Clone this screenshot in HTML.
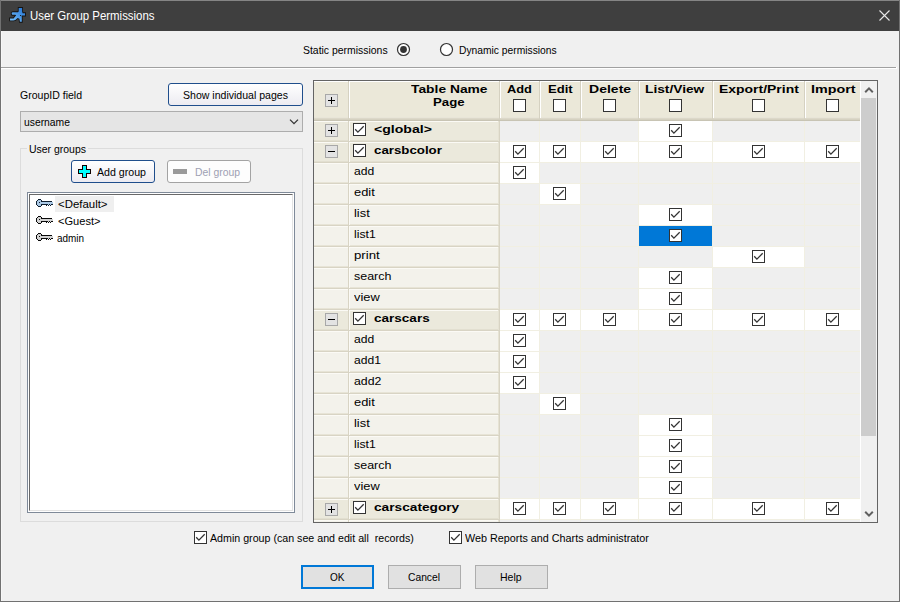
<!DOCTYPE html>
<html><head><meta charset="utf-8"><title>User Group Permissions</title>
<style>
html,body{margin:0;padding:0;width:900px;height:602px;overflow:hidden;background:#f0f0f0}
body{position:relative;font-family:'Liberation Sans', sans-serif}
body>div,body>svg,body>span{position:absolute;box-sizing:content-box}
span{white-space:pre;transform-origin:0 0}
</style></head><body>
<div style="left:0px;top:0px;width:900px;height:602px;background:#f0f0f0"></div>
<div style="left:0px;top:0px;width:900px;height:31px;background:#3f3f3f"></div>
<div style="left:0px;top:0px;width:900px;height:1px;background:#858585"></div>
<div style="left:0px;top:0px;width:1px;height:602px;background:#717171"></div>
<div style="left:899px;top:0px;width:1px;height:602px;background:#717171"></div>
<div style="left:0px;top:601px;width:900px;height:1px;background:#717171"></div>
<svg style="left:6px;top:4px" width="24" height="22" viewBox="0 0 24 22">
<defs><linearGradient id="rg" x1="0" y1="1" x2="1" y2="0"><stop offset="0" stop-color="#7cc6ff"/><stop offset="1" stop-color="#1f6fd0"/></linearGradient></defs>
<path d="M12.7 4.0 L16.1 4.0 L16.1 7.4 L16.6 9.2 L19.0 9.2 L19.0 11.6 L15.5 11.6 L15.8 13.0 L15.8 17.8 L13.9 17.8 L13.4 14.8 L11.6 13.9 L9.4 15.9 L7.5 16.4 L4.1 16.4 L4.0 14.4 L7.6 14.4 L10.2 11.3 L9.2 10.8 L6.2 10.8 L5.7 9.8 L5.8 8.6 L7.0 8.2 L11.9 8.2 L12.7 7.4 Z" fill="#141414" stroke="#141414" stroke-width="1.8" stroke-linejoin="miter"/>
<path d="M12.7 4.0 L16.1 4.0 L16.1 7.4 L16.6 9.2 L19.0 9.2 L19.0 11.6 L15.5 11.6 L15.8 13.0 L15.8 17.8 L13.9 17.8 L13.4 14.8 L11.6 13.9 L9.4 15.9 L7.5 16.4 L4.1 16.4 L4.0 14.4 L7.6 14.4 L10.2 11.3 L9.2 10.8 L6.2 10.8 L5.7 9.8 L5.8 8.6 L7.0 8.2 L11.9 8.2 L12.7 7.4 Z" fill="url(#rg)"/>
<rect x="14" y="11" width="1" height="1" fill="#222"/>
</svg>
<svg style="left:878px;top:9px" width="13" height="13" viewBox="0 0 13 13"><path d="M1.5 1.5 L11.5 11.5 M11.5 1.5 L1.5 11.5" stroke="#e8e8e8" stroke-width="1.1"/></svg>
<div style="left:1px;top:31px;width:1px;height:570px;background:#f7f7f7"></div>
<svg style="left:396px;top:42px" width="15" height="15" viewBox="0 0 15 15"><circle cx="7.5" cy="7.5" r="6" fill="#fff" stroke="#333" stroke-width="1.2"/><circle cx="7.5" cy="7.5" r="3.4" fill="#333"/></svg>
<svg style="left:439px;top:42px" width="15" height="15" viewBox="0 0 15 15"><circle cx="7.5" cy="7.5" r="6" fill="#fff" stroke="#333" stroke-width="1.2"/></svg>
<div style="left:1px;top:67px;width:895px;height:1px;background:#a0a0a0"></div>
<div style="left:1px;top:68px;width:896px;height:1px;background:#fff"></div>
<div style="left:896px;top:67px;width:1px;height:1px;background:#fff"></div>
<div style="left:168px;top:83px;width:133px;height:21px;border:1px solid #1f4e8c;border-radius:3px;background:linear-gradient(#ffffff,#ecebf1)"></div>
<div style="left:20px;top:111px;width:281px;height:19px;border:1px solid #adadad;background:#e5e5e5"></div>
<svg style="left:289px;top:118px" width="10" height="7" viewBox="0 0 10 7"><path d="M1 1.6 L5 5.6 L9 1.6" fill="none" stroke="#333" stroke-width="1.3"/></svg>
<div style="left:20px;top:148px;width:281px;height:372px;border:1px solid #dcdcdc"></div>
<div style="left:27px;top:146px;width:61px;height:5px;background:#f0f0f0"></div>
<div style="left:71px;top:160px;width:82px;height:21px;border:1px solid #1f4e8c;border-radius:3px;background:linear-gradient(#ffffff,#ecebf1)"></div>
<svg style="left:78px;top:165px" width="13" height="13" viewBox="0 0 13 13" shape-rendering="crispEdges"><path d="M4 0 H9 V4 H13 V9 H9 V13 H4 V9 H0 V4 H4 Z" fill="#100000"/><path d="M5 1 H8 V5 H12 V8 H8 V12 H5 V8 H1 V5 H5 Z" fill="#00ffff"/></svg>
<div style="left:167px;top:160px;width:82px;height:21px;border:1px solid #a3a3a3;border-radius:3px;background:#fdfdfd"></div>
<div style="left:173px;top:169px;width:14px;height:5px;background:#9a9a9a"></div>
<div style="left:27px;top:192px;width:266px;height:319px;border:1px solid #7f8a99;background:#fff"></div>
<div style="left:29px;top:194px;width:262px;height:315px;border:1px solid #e3e3e3;border-left-color:#696969;border-top-color:#696969;background:#fff"></div>
<div style="left:55px;top:196px;width:59px;height:16px;background:#efefef"></div>
<svg style="left:36px;top:199px" width="17" height="8" viewBox="0 0 17 8" shape-rendering="crispEdges"><rect x="2" y="0" width="1" height="1" fill="#0f1f30"/><rect x="3" y="0" width="1" height="1" fill="#0f1f30"/><rect x="4" y="0" width="1" height="1" fill="#0f1f30"/><rect x="1" y="1" width="1" height="1" fill="#0f1f30"/><rect x="2" y="1" width="1" height="1" fill="#abc9e6"/><rect x="3" y="1" width="1" height="1" fill="#abc9e6"/><rect x="4" y="1" width="1" height="1" fill="#abc9e6"/><rect x="5" y="1" width="1" height="1" fill="#0f1f30"/><rect x="0" y="2" width="1" height="1" fill="#0f1f30"/><rect x="1" y="2" width="1" height="1" fill="#abc9e6"/><rect x="2" y="2" width="1" height="1" fill="#abc9e6"/><rect x="3" y="2" width="1" height="1" fill="#abc9e6"/><rect x="4" y="2" width="1" height="1" fill="#abc9e6"/><rect x="5" y="2" width="1" height="1" fill="#0f1f30"/><rect x="6" y="2" width="1" height="1" fill="#0f1f30"/><rect x="7" y="2" width="1" height="1" fill="#0f1f30"/><rect x="8" y="2" width="1" height="1" fill="#0f1f30"/><rect x="9" y="2" width="1" height="1" fill="#0f1f30"/><rect x="10" y="2" width="1" height="1" fill="#0f1f30"/><rect x="11" y="2" width="1" height="1" fill="#0f1f30"/><rect x="12" y="2" width="1" height="1" fill="#0f1f30"/><rect x="13" y="2" width="1" height="1" fill="#0f1f30"/><rect x="14" y="2" width="1" height="1" fill="#0f1f30"/><rect x="15" y="2" width="1" height="1" fill="#0f1f30"/><rect x="0" y="3" width="1" height="1" fill="#0f1f30"/><rect x="1" y="3" width="1" height="1" fill="#abc9e6"/><rect x="2" y="3" width="1" height="1" fill="#abc9e6"/><rect x="3" y="3" width="1" height="1" fill="#0f1f30"/><rect x="4" y="3" width="1" height="1" fill="#abc9e6"/><rect x="5" y="3" width="1" height="1" fill="#abc9e6"/><rect x="6" y="3" width="1" height="1" fill="#abc9e6"/><rect x="7" y="3" width="1" height="1" fill="#abc9e6"/><rect x="8" y="3" width="1" height="1" fill="#abc9e6"/><rect x="9" y="3" width="1" height="1" fill="#abc9e6"/><rect x="10" y="3" width="1" height="1" fill="#abc9e6"/><rect x="11" y="3" width="1" height="1" fill="#abc9e6"/><rect x="12" y="3" width="1" height="1" fill="#abc9e6"/><rect x="13" y="3" width="1" height="1" fill="#abc9e6"/><rect x="14" y="3" width="1" height="1" fill="#abc9e6"/><rect x="15" y="3" width="1" height="1" fill="#abc9e6"/><rect x="16" y="3" width="1" height="1" fill="#abc9e6"/><rect x="0" y="4" width="1" height="1" fill="#0f1f30"/><rect x="1" y="4" width="1" height="1" fill="#abc9e6"/><rect x="2" y="4" width="1" height="1" fill="#abc9e6"/><rect x="3" y="4" width="1" height="1" fill="#abc9e6"/><rect x="4" y="4" width="1" height="1" fill="#abc9e6"/><rect x="5" y="4" width="1" height="1" fill="#abc9e6"/><rect x="6" y="4" width="1" height="1" fill="#abc9e6"/><rect x="7" y="4" width="1" height="1" fill="#abc9e6"/><rect x="8" y="4" width="1" height="1" fill="#abc9e6"/><rect x="9" y="4" width="1" height="1" fill="#abc9e6"/><rect x="10" y="4" width="1" height="1" fill="#abc9e6"/><rect x="11" y="4" width="1" height="1" fill="#abc9e6"/><rect x="12" y="4" width="1" height="1" fill="#abc9e6"/><rect x="13" y="4" width="1" height="1" fill="#abc9e6"/><rect x="14" y="4" width="1" height="1" fill="#abc9e6"/><rect x="15" y="4" width="1" height="1" fill="#abc9e6"/><rect x="16" y="4" width="1" height="1" fill="#abc9e6"/><rect x="0" y="5" width="1" height="1" fill="#0f1f30"/><rect x="1" y="5" width="1" height="1" fill="#abc9e6"/><rect x="2" y="5" width="1" height="1" fill="#abc9e6"/><rect x="3" y="5" width="1" height="1" fill="#abc9e6"/><rect x="4" y="5" width="1" height="1" fill="#abc9e6"/><rect x="5" y="5" width="1" height="1" fill="#0f1f30"/><rect x="6" y="5" width="1" height="1" fill="#0f1f30"/><rect x="7" y="5" width="1" height="1" fill="#0f1f30"/><rect x="8" y="5" width="1" height="1" fill="#0f1f30"/><rect x="9" y="5" width="1" height="1" fill="#0f1f30"/><rect x="10" y="5" width="1" height="1" fill="#0f1f30"/><rect x="11" y="5" width="1" height="1" fill="#0f1f30"/><rect x="12" y="5" width="1" height="1" fill="#abc9e6"/><rect x="13" y="5" width="1" height="1" fill="#0f1f30"/><rect x="14" y="5" width="1" height="1" fill="#abc9e6"/><rect x="15" y="5" width="1" height="1" fill="#0f1f30"/><rect x="16" y="5" width="1" height="1" fill="#0f1f30"/><rect x="1" y="6" width="1" height="1" fill="#0f1f30"/><rect x="2" y="6" width="1" height="1" fill="#abc9e6"/><rect x="3" y="6" width="1" height="1" fill="#abc9e6"/><rect x="4" y="6" width="1" height="1" fill="#abc9e6"/><rect x="5" y="6" width="1" height="1" fill="#0f1f30"/><rect x="10" y="6" width="1" height="1" fill="#0f1f30"/><rect x="12" y="6" width="1" height="1" fill="#0f1f30"/><rect x="14" y="6" width="1" height="1" fill="#0f1f30"/><rect x="2" y="7" width="1" height="1" fill="#0f1f30"/><rect x="3" y="7" width="1" height="1" fill="#0f1f30"/><rect x="4" y="7" width="1" height="1" fill="#0f1f30"/></svg>
<svg style="left:36px;top:216px" width="17" height="8" viewBox="0 0 17 8" shape-rendering="crispEdges"><rect x="2" y="0" width="1" height="1" fill="#0a0a0a"/><rect x="3" y="0" width="1" height="1" fill="#0a0a0a"/><rect x="4" y="0" width="1" height="1" fill="#0a0a0a"/><rect x="1" y="1" width="1" height="1" fill="#0a0a0a"/><rect x="2" y="1" width="1" height="1" fill="#d2d2d2"/><rect x="3" y="1" width="1" height="1" fill="#d2d2d2"/><rect x="4" y="1" width="1" height="1" fill="#d2d2d2"/><rect x="5" y="1" width="1" height="1" fill="#0a0a0a"/><rect x="0" y="2" width="1" height="1" fill="#0a0a0a"/><rect x="1" y="2" width="1" height="1" fill="#d2d2d2"/><rect x="2" y="2" width="1" height="1" fill="#d2d2d2"/><rect x="3" y="2" width="1" height="1" fill="#d2d2d2"/><rect x="4" y="2" width="1" height="1" fill="#d2d2d2"/><rect x="5" y="2" width="1" height="1" fill="#0a0a0a"/><rect x="6" y="2" width="1" height="1" fill="#0a0a0a"/><rect x="7" y="2" width="1" height="1" fill="#0a0a0a"/><rect x="8" y="2" width="1" height="1" fill="#0a0a0a"/><rect x="9" y="2" width="1" height="1" fill="#0a0a0a"/><rect x="10" y="2" width="1" height="1" fill="#0a0a0a"/><rect x="11" y="2" width="1" height="1" fill="#0a0a0a"/><rect x="12" y="2" width="1" height="1" fill="#0a0a0a"/><rect x="13" y="2" width="1" height="1" fill="#0a0a0a"/><rect x="14" y="2" width="1" height="1" fill="#0a0a0a"/><rect x="15" y="2" width="1" height="1" fill="#0a0a0a"/><rect x="0" y="3" width="1" height="1" fill="#0a0a0a"/><rect x="1" y="3" width="1" height="1" fill="#d2d2d2"/><rect x="2" y="3" width="1" height="1" fill="#d2d2d2"/><rect x="3" y="3" width="1" height="1" fill="#0a0a0a"/><rect x="4" y="3" width="1" height="1" fill="#d2d2d2"/><rect x="5" y="3" width="1" height="1" fill="#d2d2d2"/><rect x="6" y="3" width="1" height="1" fill="#d2d2d2"/><rect x="7" y="3" width="1" height="1" fill="#d2d2d2"/><rect x="8" y="3" width="1" height="1" fill="#d2d2d2"/><rect x="9" y="3" width="1" height="1" fill="#d2d2d2"/><rect x="10" y="3" width="1" height="1" fill="#d2d2d2"/><rect x="11" y="3" width="1" height="1" fill="#d2d2d2"/><rect x="12" y="3" width="1" height="1" fill="#d2d2d2"/><rect x="13" y="3" width="1" height="1" fill="#d2d2d2"/><rect x="14" y="3" width="1" height="1" fill="#d2d2d2"/><rect x="15" y="3" width="1" height="1" fill="#d2d2d2"/><rect x="16" y="3" width="1" height="1" fill="#d2d2d2"/><rect x="0" y="4" width="1" height="1" fill="#0a0a0a"/><rect x="1" y="4" width="1" height="1" fill="#d2d2d2"/><rect x="2" y="4" width="1" height="1" fill="#d2d2d2"/><rect x="3" y="4" width="1" height="1" fill="#d2d2d2"/><rect x="4" y="4" width="1" height="1" fill="#d2d2d2"/><rect x="5" y="4" width="1" height="1" fill="#d2d2d2"/><rect x="6" y="4" width="1" height="1" fill="#d2d2d2"/><rect x="7" y="4" width="1" height="1" fill="#d2d2d2"/><rect x="8" y="4" width="1" height="1" fill="#d2d2d2"/><rect x="9" y="4" width="1" height="1" fill="#d2d2d2"/><rect x="10" y="4" width="1" height="1" fill="#d2d2d2"/><rect x="11" y="4" width="1" height="1" fill="#d2d2d2"/><rect x="12" y="4" width="1" height="1" fill="#d2d2d2"/><rect x="13" y="4" width="1" height="1" fill="#d2d2d2"/><rect x="14" y="4" width="1" height="1" fill="#d2d2d2"/><rect x="15" y="4" width="1" height="1" fill="#d2d2d2"/><rect x="16" y="4" width="1" height="1" fill="#d2d2d2"/><rect x="0" y="5" width="1" height="1" fill="#0a0a0a"/><rect x="1" y="5" width="1" height="1" fill="#d2d2d2"/><rect x="2" y="5" width="1" height="1" fill="#d2d2d2"/><rect x="3" y="5" width="1" height="1" fill="#d2d2d2"/><rect x="4" y="5" width="1" height="1" fill="#d2d2d2"/><rect x="5" y="5" width="1" height="1" fill="#0a0a0a"/><rect x="6" y="5" width="1" height="1" fill="#0a0a0a"/><rect x="7" y="5" width="1" height="1" fill="#0a0a0a"/><rect x="8" y="5" width="1" height="1" fill="#0a0a0a"/><rect x="9" y="5" width="1" height="1" fill="#0a0a0a"/><rect x="10" y="5" width="1" height="1" fill="#0a0a0a"/><rect x="11" y="5" width="1" height="1" fill="#0a0a0a"/><rect x="12" y="5" width="1" height="1" fill="#d2d2d2"/><rect x="13" y="5" width="1" height="1" fill="#0a0a0a"/><rect x="14" y="5" width="1" height="1" fill="#d2d2d2"/><rect x="15" y="5" width="1" height="1" fill="#0a0a0a"/><rect x="16" y="5" width="1" height="1" fill="#0a0a0a"/><rect x="1" y="6" width="1" height="1" fill="#0a0a0a"/><rect x="2" y="6" width="1" height="1" fill="#d2d2d2"/><rect x="3" y="6" width="1" height="1" fill="#d2d2d2"/><rect x="4" y="6" width="1" height="1" fill="#d2d2d2"/><rect x="5" y="6" width="1" height="1" fill="#0a0a0a"/><rect x="10" y="6" width="1" height="1" fill="#0a0a0a"/><rect x="12" y="6" width="1" height="1" fill="#0a0a0a"/><rect x="14" y="6" width="1" height="1" fill="#0a0a0a"/><rect x="2" y="7" width="1" height="1" fill="#0a0a0a"/><rect x="3" y="7" width="1" height="1" fill="#0a0a0a"/><rect x="4" y="7" width="1" height="1" fill="#0a0a0a"/></svg>
<svg style="left:36px;top:233px" width="17" height="8" viewBox="0 0 17 8" shape-rendering="crispEdges"><rect x="2" y="0" width="1" height="1" fill="#0a0a0a"/><rect x="3" y="0" width="1" height="1" fill="#0a0a0a"/><rect x="4" y="0" width="1" height="1" fill="#0a0a0a"/><rect x="1" y="1" width="1" height="1" fill="#0a0a0a"/><rect x="2" y="1" width="1" height="1" fill="#d2d2d2"/><rect x="3" y="1" width="1" height="1" fill="#d2d2d2"/><rect x="4" y="1" width="1" height="1" fill="#d2d2d2"/><rect x="5" y="1" width="1" height="1" fill="#0a0a0a"/><rect x="0" y="2" width="1" height="1" fill="#0a0a0a"/><rect x="1" y="2" width="1" height="1" fill="#d2d2d2"/><rect x="2" y="2" width="1" height="1" fill="#d2d2d2"/><rect x="3" y="2" width="1" height="1" fill="#d2d2d2"/><rect x="4" y="2" width="1" height="1" fill="#d2d2d2"/><rect x="5" y="2" width="1" height="1" fill="#0a0a0a"/><rect x="6" y="2" width="1" height="1" fill="#0a0a0a"/><rect x="7" y="2" width="1" height="1" fill="#0a0a0a"/><rect x="8" y="2" width="1" height="1" fill="#0a0a0a"/><rect x="9" y="2" width="1" height="1" fill="#0a0a0a"/><rect x="10" y="2" width="1" height="1" fill="#0a0a0a"/><rect x="11" y="2" width="1" height="1" fill="#0a0a0a"/><rect x="12" y="2" width="1" height="1" fill="#0a0a0a"/><rect x="13" y="2" width="1" height="1" fill="#0a0a0a"/><rect x="14" y="2" width="1" height="1" fill="#0a0a0a"/><rect x="15" y="2" width="1" height="1" fill="#0a0a0a"/><rect x="0" y="3" width="1" height="1" fill="#0a0a0a"/><rect x="1" y="3" width="1" height="1" fill="#d2d2d2"/><rect x="2" y="3" width="1" height="1" fill="#d2d2d2"/><rect x="3" y="3" width="1" height="1" fill="#0a0a0a"/><rect x="4" y="3" width="1" height="1" fill="#d2d2d2"/><rect x="5" y="3" width="1" height="1" fill="#d2d2d2"/><rect x="6" y="3" width="1" height="1" fill="#d2d2d2"/><rect x="7" y="3" width="1" height="1" fill="#d2d2d2"/><rect x="8" y="3" width="1" height="1" fill="#d2d2d2"/><rect x="9" y="3" width="1" height="1" fill="#d2d2d2"/><rect x="10" y="3" width="1" height="1" fill="#d2d2d2"/><rect x="11" y="3" width="1" height="1" fill="#d2d2d2"/><rect x="12" y="3" width="1" height="1" fill="#d2d2d2"/><rect x="13" y="3" width="1" height="1" fill="#d2d2d2"/><rect x="14" y="3" width="1" height="1" fill="#d2d2d2"/><rect x="15" y="3" width="1" height="1" fill="#d2d2d2"/><rect x="16" y="3" width="1" height="1" fill="#d2d2d2"/><rect x="0" y="4" width="1" height="1" fill="#0a0a0a"/><rect x="1" y="4" width="1" height="1" fill="#d2d2d2"/><rect x="2" y="4" width="1" height="1" fill="#d2d2d2"/><rect x="3" y="4" width="1" height="1" fill="#d2d2d2"/><rect x="4" y="4" width="1" height="1" fill="#d2d2d2"/><rect x="5" y="4" width="1" height="1" fill="#d2d2d2"/><rect x="6" y="4" width="1" height="1" fill="#d2d2d2"/><rect x="7" y="4" width="1" height="1" fill="#d2d2d2"/><rect x="8" y="4" width="1" height="1" fill="#d2d2d2"/><rect x="9" y="4" width="1" height="1" fill="#d2d2d2"/><rect x="10" y="4" width="1" height="1" fill="#d2d2d2"/><rect x="11" y="4" width="1" height="1" fill="#d2d2d2"/><rect x="12" y="4" width="1" height="1" fill="#d2d2d2"/><rect x="13" y="4" width="1" height="1" fill="#d2d2d2"/><rect x="14" y="4" width="1" height="1" fill="#d2d2d2"/><rect x="15" y="4" width="1" height="1" fill="#d2d2d2"/><rect x="16" y="4" width="1" height="1" fill="#d2d2d2"/><rect x="0" y="5" width="1" height="1" fill="#0a0a0a"/><rect x="1" y="5" width="1" height="1" fill="#d2d2d2"/><rect x="2" y="5" width="1" height="1" fill="#d2d2d2"/><rect x="3" y="5" width="1" height="1" fill="#d2d2d2"/><rect x="4" y="5" width="1" height="1" fill="#d2d2d2"/><rect x="5" y="5" width="1" height="1" fill="#0a0a0a"/><rect x="6" y="5" width="1" height="1" fill="#0a0a0a"/><rect x="7" y="5" width="1" height="1" fill="#0a0a0a"/><rect x="8" y="5" width="1" height="1" fill="#0a0a0a"/><rect x="9" y="5" width="1" height="1" fill="#0a0a0a"/><rect x="10" y="5" width="1" height="1" fill="#0a0a0a"/><rect x="11" y="5" width="1" height="1" fill="#0a0a0a"/><rect x="12" y="5" width="1" height="1" fill="#d2d2d2"/><rect x="13" y="5" width="1" height="1" fill="#0a0a0a"/><rect x="14" y="5" width="1" height="1" fill="#d2d2d2"/><rect x="15" y="5" width="1" height="1" fill="#0a0a0a"/><rect x="16" y="5" width="1" height="1" fill="#0a0a0a"/><rect x="1" y="6" width="1" height="1" fill="#0a0a0a"/><rect x="2" y="6" width="1" height="1" fill="#d2d2d2"/><rect x="3" y="6" width="1" height="1" fill="#d2d2d2"/><rect x="4" y="6" width="1" height="1" fill="#d2d2d2"/><rect x="5" y="6" width="1" height="1" fill="#0a0a0a"/><rect x="10" y="6" width="1" height="1" fill="#0a0a0a"/><rect x="12" y="6" width="1" height="1" fill="#0a0a0a"/><rect x="14" y="6" width="1" height="1" fill="#0a0a0a"/><rect x="2" y="7" width="1" height="1" fill="#0a0a0a"/><rect x="3" y="7" width="1" height="1" fill="#0a0a0a"/><rect x="4" y="7" width="1" height="1" fill="#0a0a0a"/></svg>
<div style="left:194px;top:531px;width:11px;height:11px;border:1px solid #333;background:#fff"></div>
<svg style="left:194px;top:531px" width="13" height="13" viewBox="0 0 13 13"><path d="M2.2 6.3 L4.9 9.1 L10.7 3.3" fill="none" stroke="#333" stroke-width="1.3"/></svg>
<div style="left:449px;top:531px;width:11px;height:11px;border:1px solid #333;background:#fff"></div>
<svg style="left:449px;top:531px" width="13" height="13" viewBox="0 0 13 13"><path d="M2.2 6.3 L4.9 9.1 L10.7 3.3" fill="none" stroke="#333" stroke-width="1.3"/></svg>
<div style="left:301px;top:565px;width:69px;height:20px;border:2px solid #0078d7;background:#e1e1e1"></div>
<div style="left:388px;top:565px;width:71px;height:22px;border:1px solid #adadad;background:#e1e1e1"></div>
<div style="left:475px;top:565px;width:71px;height:22px;border:1px solid #adadad;background:#e1e1e1"></div>
<div style="left:313px;top:80px;width:565px;height:443px;background:#646464"></div>
<div style="left:314px;top:81px;width:563px;height:441px;background:#efefef"></div>
<div style="left:314px;top:81px;width:546px;height:40px;background:#ebe8d9"></div>
<div style="left:314px;top:117px;width:546px;height:1px;background:#e8e5d8"></div>
<div style="left:314px;top:118px;width:546px;height:1px;background:#dcd8c9"></div>
<div style="left:314px;top:119px;width:546px;height:1px;background:#d5d1c1"></div>
<div style="left:314px;top:120px;width:546px;height:1px;background:#c8c4b4"></div>
<div style="left:314px;top:81px;width:546px;height:1px;background:#fff"></div>
<div style="left:348px;top:81px;width:1px;height:38px;background:#d5d1c1"></div>
<div style="left:349px;top:82px;width:1px;height:36px;background:#fff"></div>
<div style="left:499px;top:81px;width:1px;height:38px;background:#d5d1c1"></div>
<div style="left:500px;top:82px;width:1px;height:36px;background:#fff"></div>
<div style="left:539px;top:81px;width:1px;height:38px;background:#d5d1c1"></div>
<div style="left:540px;top:82px;width:1px;height:36px;background:#fff"></div>
<div style="left:580px;top:81px;width:1px;height:38px;background:#d5d1c1"></div>
<div style="left:581px;top:82px;width:1px;height:36px;background:#fff"></div>
<div style="left:638px;top:81px;width:1px;height:38px;background:#d5d1c1"></div>
<div style="left:639px;top:82px;width:1px;height:36px;background:#fff"></div>
<div style="left:712px;top:81px;width:1px;height:38px;background:#d5d1c1"></div>
<div style="left:713px;top:82px;width:1px;height:36px;background:#fff"></div>
<div style="left:804px;top:81px;width:1px;height:38px;background:#d5d1c1"></div>
<div style="left:805px;top:82px;width:1px;height:36px;background:#fff"></div>
<div style="left:325px;top:94px;width:11px;height:11px;border:1px solid #a8a8a8;background:#e3e3e3"></div>
<div style="left:328px;top:100px;width:7px;height:1px;background:#000"></div>
<div style="left:331px;top:97px;width:1px;height:7px;background:#000"></div>
<div style="left:513px;top:99px;width:11px;height:11px;border:1px solid #333;background:#fff"></div>
<div style="left:553px;top:99px;width:11px;height:11px;border:1px solid #333;background:#fff"></div>
<div style="left:603px;top:99px;width:11px;height:11px;border:1px solid #333;background:#fff"></div>
<div style="left:669px;top:99px;width:11px;height:11px;border:1px solid #333;background:#fff"></div>
<div style="left:752px;top:99px;width:11px;height:11px;border:1px solid #333;background:#fff"></div>
<div style="left:826px;top:99px;width:11px;height:11px;border:1px solid #333;background:#fff"></div>
<div style="left:314px;top:121px;width:185px;height:21px;background:#ebe9dc"></div>
<div style="left:314px;top:121px;width:185px;height:1px;background:#fbfaf5"></div>
<div style="left:314px;top:140px;width:185px;height:1px;background:#e2dfd0"></div>
<div style="left:314px;top:141px;width:185px;height:1px;background:#d8d4c4"></div>
<div style="left:348px;top:121px;width:1px;height:21px;background:#d8d4c4"></div>
<div style="left:349px;top:121px;width:1px;height:20px;background:#fbfaf5"></div>
<div style="left:498px;top:121px;width:1px;height:20px;background:#e6e3d4"></div>
<div style="left:499px;top:121px;width:1px;height:21px;background:#d8d4c4"></div>
<div style="left:500px;top:121px;width:39px;height:20px;background:#efefef"></div>
<div style="left:500px;top:141px;width:39px;height:1px;background:#f1efe2"></div>
<div style="left:539px;top:121px;width:1px;height:21px;background:#f1efe2"></div>
<div style="left:540px;top:121px;width:40px;height:20px;background:#efefef"></div>
<div style="left:540px;top:141px;width:40px;height:1px;background:#f1efe2"></div>
<div style="left:580px;top:121px;width:1px;height:21px;background:#f1efe2"></div>
<div style="left:581px;top:121px;width:57px;height:20px;background:#efefef"></div>
<div style="left:581px;top:141px;width:57px;height:1px;background:#f1efe2"></div>
<div style="left:638px;top:121px;width:1px;height:21px;background:#f1efe2"></div>
<div style="left:639px;top:121px;width:73px;height:20px;background:#ffffff"></div>
<div style="left:639px;top:141px;width:73px;height:1px;background:#f1efe2"></div>
<div style="left:712px;top:121px;width:1px;height:21px;background:#f1efe2"></div>
<div style="left:669px;top:124px;width:11px;height:11px;border:1px solid #333;background:#fff"></div>
<svg style="left:669px;top:124px" width="13" height="13" viewBox="0 0 13 13"><path d="M2.2 6.3 L4.9 9.1 L10.7 3.3" fill="none" stroke="#333" stroke-width="1.3"/></svg>
<div style="left:713px;top:121px;width:91px;height:20px;background:#efefef"></div>
<div style="left:713px;top:141px;width:91px;height:1px;background:#f1efe2"></div>
<div style="left:804px;top:121px;width:1px;height:21px;background:#f1efe2"></div>
<div style="left:805px;top:121px;width:55px;height:20px;background:#efefef"></div>
<div style="left:805px;top:141px;width:55px;height:1px;background:#f1efe2"></div>
<div style="left:353px;top:123px;width:11px;height:11px;border:1px solid #333;background:#fff"></div>
<svg style="left:353px;top:123px" width="13" height="13" viewBox="0 0 13 13"><path d="M2.2 6.3 L4.9 9.1 L10.7 3.3" fill="none" stroke="#333" stroke-width="1.3"/></svg>
<div style="left:325px;top:124px;width:11px;height:11px;border:1px solid #a8a8a8;background:#e3e3e3"></div>
<div style="left:328px;top:130px;width:7px;height:1px;background:#000"></div>
<div style="left:331px;top:127px;width:1px;height:7px;background:#000"></div>
<div style="left:314px;top:142px;width:185px;height:21px;background:#ebe9dc"></div>
<div style="left:314px;top:142px;width:185px;height:1px;background:#fbfaf5"></div>
<div style="left:314px;top:161px;width:185px;height:1px;background:#e2dfd0"></div>
<div style="left:314px;top:162px;width:185px;height:1px;background:#d8d4c4"></div>
<div style="left:348px;top:142px;width:1px;height:21px;background:#d8d4c4"></div>
<div style="left:349px;top:142px;width:1px;height:20px;background:#fbfaf5"></div>
<div style="left:498px;top:142px;width:1px;height:20px;background:#e6e3d4"></div>
<div style="left:499px;top:142px;width:1px;height:21px;background:#d8d4c4"></div>
<div style="left:500px;top:142px;width:39px;height:20px;background:#ffffff"></div>
<div style="left:500px;top:162px;width:39px;height:1px;background:#f1efe2"></div>
<div style="left:539px;top:142px;width:1px;height:21px;background:#f1efe2"></div>
<div style="left:513px;top:145px;width:11px;height:11px;border:1px solid #333;background:#fff"></div>
<svg style="left:513px;top:145px" width="13" height="13" viewBox="0 0 13 13"><path d="M2.2 6.3 L4.9 9.1 L10.7 3.3" fill="none" stroke="#333" stroke-width="1.3"/></svg>
<div style="left:540px;top:142px;width:40px;height:20px;background:#ffffff"></div>
<div style="left:540px;top:162px;width:40px;height:1px;background:#f1efe2"></div>
<div style="left:580px;top:142px;width:1px;height:21px;background:#f1efe2"></div>
<div style="left:553px;top:145px;width:11px;height:11px;border:1px solid #333;background:#fff"></div>
<svg style="left:553px;top:145px" width="13" height="13" viewBox="0 0 13 13"><path d="M2.2 6.3 L4.9 9.1 L10.7 3.3" fill="none" stroke="#333" stroke-width="1.3"/></svg>
<div style="left:581px;top:142px;width:57px;height:20px;background:#ffffff"></div>
<div style="left:581px;top:162px;width:57px;height:1px;background:#f1efe2"></div>
<div style="left:638px;top:142px;width:1px;height:21px;background:#f1efe2"></div>
<div style="left:603px;top:145px;width:11px;height:11px;border:1px solid #333;background:#fff"></div>
<svg style="left:603px;top:145px" width="13" height="13" viewBox="0 0 13 13"><path d="M2.2 6.3 L4.9 9.1 L10.7 3.3" fill="none" stroke="#333" stroke-width="1.3"/></svg>
<div style="left:639px;top:142px;width:73px;height:20px;background:#ffffff"></div>
<div style="left:639px;top:162px;width:73px;height:1px;background:#f1efe2"></div>
<div style="left:712px;top:142px;width:1px;height:21px;background:#f1efe2"></div>
<div style="left:669px;top:145px;width:11px;height:11px;border:1px solid #333;background:#fff"></div>
<svg style="left:669px;top:145px" width="13" height="13" viewBox="0 0 13 13"><path d="M2.2 6.3 L4.9 9.1 L10.7 3.3" fill="none" stroke="#333" stroke-width="1.3"/></svg>
<div style="left:713px;top:142px;width:91px;height:20px;background:#ffffff"></div>
<div style="left:713px;top:162px;width:91px;height:1px;background:#f1efe2"></div>
<div style="left:804px;top:142px;width:1px;height:21px;background:#f1efe2"></div>
<div style="left:752px;top:145px;width:11px;height:11px;border:1px solid #333;background:#fff"></div>
<svg style="left:752px;top:145px" width="13" height="13" viewBox="0 0 13 13"><path d="M2.2 6.3 L4.9 9.1 L10.7 3.3" fill="none" stroke="#333" stroke-width="1.3"/></svg>
<div style="left:805px;top:142px;width:55px;height:20px;background:#ffffff"></div>
<div style="left:805px;top:162px;width:55px;height:1px;background:#f1efe2"></div>
<div style="left:826px;top:145px;width:11px;height:11px;border:1px solid #333;background:#fff"></div>
<svg style="left:826px;top:145px" width="13" height="13" viewBox="0 0 13 13"><path d="M2.2 6.3 L4.9 9.1 L10.7 3.3" fill="none" stroke="#333" stroke-width="1.3"/></svg>
<div style="left:353px;top:144px;width:11px;height:11px;border:1px solid #333;background:#fff"></div>
<svg style="left:353px;top:144px" width="13" height="13" viewBox="0 0 13 13"><path d="M2.2 6.3 L4.9 9.1 L10.7 3.3" fill="none" stroke="#333" stroke-width="1.3"/></svg>
<div style="left:325px;top:145px;width:11px;height:11px;border:1px solid #a8a8a8;background:#e3e3e3"></div>
<div style="left:328px;top:151px;width:7px;height:1px;background:#000"></div>
<div style="left:314px;top:163px;width:185px;height:21px;background:#f3f2eb"></div>
<div style="left:314px;top:163px;width:185px;height:1px;background:#fbfaf5"></div>
<div style="left:314px;top:182px;width:185px;height:1px;background:#e7e4d6"></div>
<div style="left:314px;top:183px;width:185px;height:1px;background:#d8d4c4"></div>
<div style="left:348px;top:163px;width:1px;height:21px;background:#d8d4c4"></div>
<div style="left:349px;top:163px;width:1px;height:20px;background:#fbfaf5"></div>
<div style="left:498px;top:163px;width:1px;height:20px;background:#e6e3d4"></div>
<div style="left:499px;top:163px;width:1px;height:21px;background:#d8d4c4"></div>
<div style="left:500px;top:163px;width:39px;height:20px;background:#ffffff"></div>
<div style="left:500px;top:183px;width:39px;height:1px;background:#f1efe2"></div>
<div style="left:539px;top:163px;width:1px;height:21px;background:#f1efe2"></div>
<div style="left:513px;top:166px;width:11px;height:11px;border:1px solid #333;background:#fff"></div>
<svg style="left:513px;top:166px" width="13" height="13" viewBox="0 0 13 13"><path d="M2.2 6.3 L4.9 9.1 L10.7 3.3" fill="none" stroke="#333" stroke-width="1.3"/></svg>
<div style="left:540px;top:163px;width:40px;height:20px;background:#efefef"></div>
<div style="left:540px;top:183px;width:40px;height:1px;background:#f1efe2"></div>
<div style="left:580px;top:163px;width:1px;height:21px;background:#f1efe2"></div>
<div style="left:581px;top:163px;width:57px;height:20px;background:#efefef"></div>
<div style="left:581px;top:183px;width:57px;height:1px;background:#f1efe2"></div>
<div style="left:638px;top:163px;width:1px;height:21px;background:#f1efe2"></div>
<div style="left:639px;top:163px;width:73px;height:20px;background:#efefef"></div>
<div style="left:639px;top:183px;width:73px;height:1px;background:#f1efe2"></div>
<div style="left:712px;top:163px;width:1px;height:21px;background:#f1efe2"></div>
<div style="left:713px;top:163px;width:91px;height:20px;background:#efefef"></div>
<div style="left:713px;top:183px;width:91px;height:1px;background:#f1efe2"></div>
<div style="left:804px;top:163px;width:1px;height:21px;background:#f1efe2"></div>
<div style="left:805px;top:163px;width:55px;height:20px;background:#efefef"></div>
<div style="left:805px;top:183px;width:55px;height:1px;background:#f1efe2"></div>
<div style="left:314px;top:184px;width:185px;height:21px;background:#f3f2eb"></div>
<div style="left:314px;top:184px;width:185px;height:1px;background:#fbfaf5"></div>
<div style="left:314px;top:203px;width:185px;height:1px;background:#e7e4d6"></div>
<div style="left:314px;top:204px;width:185px;height:1px;background:#d8d4c4"></div>
<div style="left:348px;top:184px;width:1px;height:21px;background:#d8d4c4"></div>
<div style="left:349px;top:184px;width:1px;height:20px;background:#fbfaf5"></div>
<div style="left:498px;top:184px;width:1px;height:20px;background:#e6e3d4"></div>
<div style="left:499px;top:184px;width:1px;height:21px;background:#d8d4c4"></div>
<div style="left:500px;top:184px;width:39px;height:20px;background:#efefef"></div>
<div style="left:500px;top:204px;width:39px;height:1px;background:#f1efe2"></div>
<div style="left:539px;top:184px;width:1px;height:21px;background:#f1efe2"></div>
<div style="left:540px;top:184px;width:40px;height:20px;background:#ffffff"></div>
<div style="left:540px;top:204px;width:40px;height:1px;background:#f1efe2"></div>
<div style="left:580px;top:184px;width:1px;height:21px;background:#f1efe2"></div>
<div style="left:553px;top:187px;width:11px;height:11px;border:1px solid #333;background:#fff"></div>
<svg style="left:553px;top:187px" width="13" height="13" viewBox="0 0 13 13"><path d="M2.2 6.3 L4.9 9.1 L10.7 3.3" fill="none" stroke="#333" stroke-width="1.3"/></svg>
<div style="left:581px;top:184px;width:57px;height:20px;background:#efefef"></div>
<div style="left:581px;top:204px;width:57px;height:1px;background:#f1efe2"></div>
<div style="left:638px;top:184px;width:1px;height:21px;background:#f1efe2"></div>
<div style="left:639px;top:184px;width:73px;height:20px;background:#efefef"></div>
<div style="left:639px;top:204px;width:73px;height:1px;background:#f1efe2"></div>
<div style="left:712px;top:184px;width:1px;height:21px;background:#f1efe2"></div>
<div style="left:713px;top:184px;width:91px;height:20px;background:#efefef"></div>
<div style="left:713px;top:204px;width:91px;height:1px;background:#f1efe2"></div>
<div style="left:804px;top:184px;width:1px;height:21px;background:#f1efe2"></div>
<div style="left:805px;top:184px;width:55px;height:20px;background:#efefef"></div>
<div style="left:805px;top:204px;width:55px;height:1px;background:#f1efe2"></div>
<div style="left:314px;top:205px;width:185px;height:21px;background:#f3f2eb"></div>
<div style="left:314px;top:205px;width:185px;height:1px;background:#fbfaf5"></div>
<div style="left:314px;top:224px;width:185px;height:1px;background:#e7e4d6"></div>
<div style="left:314px;top:225px;width:185px;height:1px;background:#d8d4c4"></div>
<div style="left:348px;top:205px;width:1px;height:21px;background:#d8d4c4"></div>
<div style="left:349px;top:205px;width:1px;height:20px;background:#fbfaf5"></div>
<div style="left:498px;top:205px;width:1px;height:20px;background:#e6e3d4"></div>
<div style="left:499px;top:205px;width:1px;height:21px;background:#d8d4c4"></div>
<div style="left:500px;top:205px;width:39px;height:20px;background:#efefef"></div>
<div style="left:500px;top:225px;width:39px;height:1px;background:#f1efe2"></div>
<div style="left:539px;top:205px;width:1px;height:21px;background:#f1efe2"></div>
<div style="left:540px;top:205px;width:40px;height:20px;background:#efefef"></div>
<div style="left:540px;top:225px;width:40px;height:1px;background:#f1efe2"></div>
<div style="left:580px;top:205px;width:1px;height:21px;background:#f1efe2"></div>
<div style="left:581px;top:205px;width:57px;height:20px;background:#efefef"></div>
<div style="left:581px;top:225px;width:57px;height:1px;background:#f1efe2"></div>
<div style="left:638px;top:205px;width:1px;height:21px;background:#f1efe2"></div>
<div style="left:639px;top:205px;width:73px;height:20px;background:#ffffff"></div>
<div style="left:639px;top:225px;width:73px;height:1px;background:#f1efe2"></div>
<div style="left:712px;top:205px;width:1px;height:21px;background:#f1efe2"></div>
<div style="left:669px;top:208px;width:11px;height:11px;border:1px solid #333;background:#fff"></div>
<svg style="left:669px;top:208px" width="13" height="13" viewBox="0 0 13 13"><path d="M2.2 6.3 L4.9 9.1 L10.7 3.3" fill="none" stroke="#333" stroke-width="1.3"/></svg>
<div style="left:713px;top:205px;width:91px;height:20px;background:#efefef"></div>
<div style="left:713px;top:225px;width:91px;height:1px;background:#f1efe2"></div>
<div style="left:804px;top:205px;width:1px;height:21px;background:#f1efe2"></div>
<div style="left:805px;top:205px;width:55px;height:20px;background:#efefef"></div>
<div style="left:805px;top:225px;width:55px;height:1px;background:#f1efe2"></div>
<div style="left:314px;top:226px;width:185px;height:21px;background:#f3f2eb"></div>
<div style="left:314px;top:226px;width:185px;height:1px;background:#fbfaf5"></div>
<div style="left:314px;top:245px;width:185px;height:1px;background:#e7e4d6"></div>
<div style="left:314px;top:246px;width:185px;height:1px;background:#d8d4c4"></div>
<div style="left:348px;top:226px;width:1px;height:21px;background:#d8d4c4"></div>
<div style="left:349px;top:226px;width:1px;height:20px;background:#fbfaf5"></div>
<div style="left:498px;top:226px;width:1px;height:20px;background:#e6e3d4"></div>
<div style="left:499px;top:226px;width:1px;height:21px;background:#d8d4c4"></div>
<div style="left:500px;top:226px;width:39px;height:20px;background:#efefef"></div>
<div style="left:500px;top:246px;width:39px;height:1px;background:#f1efe2"></div>
<div style="left:539px;top:226px;width:1px;height:21px;background:#f1efe2"></div>
<div style="left:540px;top:226px;width:40px;height:20px;background:#efefef"></div>
<div style="left:540px;top:246px;width:40px;height:1px;background:#f1efe2"></div>
<div style="left:580px;top:226px;width:1px;height:21px;background:#f1efe2"></div>
<div style="left:581px;top:226px;width:57px;height:20px;background:#efefef"></div>
<div style="left:581px;top:246px;width:57px;height:1px;background:#f1efe2"></div>
<div style="left:638px;top:226px;width:1px;height:21px;background:#f1efe2"></div>
<div style="left:639px;top:226px;width:73px;height:20px;background:#0078d7"></div>
<div style="left:639px;top:246px;width:73px;height:1px;background:#f1efe2"></div>
<div style="left:712px;top:226px;width:1px;height:21px;background:#f1efe2"></div>
<div style="left:669px;top:229px;width:11px;height:11px;border:1px solid #333;background:#fff"></div>
<svg style="left:669px;top:229px" width="13" height="13" viewBox="0 0 13 13"><path d="M2.2 6.3 L4.9 9.1 L10.7 3.3" fill="none" stroke="#333" stroke-width="1.3"/></svg>
<div style="left:713px;top:226px;width:91px;height:20px;background:#efefef"></div>
<div style="left:713px;top:246px;width:91px;height:1px;background:#f1efe2"></div>
<div style="left:804px;top:226px;width:1px;height:21px;background:#f1efe2"></div>
<div style="left:805px;top:226px;width:55px;height:20px;background:#efefef"></div>
<div style="left:805px;top:246px;width:55px;height:1px;background:#f1efe2"></div>
<div style="left:314px;top:247px;width:185px;height:21px;background:#f3f2eb"></div>
<div style="left:314px;top:247px;width:185px;height:1px;background:#fbfaf5"></div>
<div style="left:314px;top:266px;width:185px;height:1px;background:#e7e4d6"></div>
<div style="left:314px;top:267px;width:185px;height:1px;background:#d8d4c4"></div>
<div style="left:348px;top:247px;width:1px;height:21px;background:#d8d4c4"></div>
<div style="left:349px;top:247px;width:1px;height:20px;background:#fbfaf5"></div>
<div style="left:498px;top:247px;width:1px;height:20px;background:#e6e3d4"></div>
<div style="left:499px;top:247px;width:1px;height:21px;background:#d8d4c4"></div>
<div style="left:500px;top:247px;width:39px;height:20px;background:#efefef"></div>
<div style="left:500px;top:267px;width:39px;height:1px;background:#f1efe2"></div>
<div style="left:539px;top:247px;width:1px;height:21px;background:#f1efe2"></div>
<div style="left:540px;top:247px;width:40px;height:20px;background:#efefef"></div>
<div style="left:540px;top:267px;width:40px;height:1px;background:#f1efe2"></div>
<div style="left:580px;top:247px;width:1px;height:21px;background:#f1efe2"></div>
<div style="left:581px;top:247px;width:57px;height:20px;background:#efefef"></div>
<div style="left:581px;top:267px;width:57px;height:1px;background:#f1efe2"></div>
<div style="left:638px;top:247px;width:1px;height:21px;background:#f1efe2"></div>
<div style="left:639px;top:247px;width:73px;height:20px;background:#efefef"></div>
<div style="left:639px;top:267px;width:73px;height:1px;background:#f1efe2"></div>
<div style="left:712px;top:247px;width:1px;height:21px;background:#f1efe2"></div>
<div style="left:713px;top:247px;width:91px;height:20px;background:#ffffff"></div>
<div style="left:713px;top:267px;width:91px;height:1px;background:#f1efe2"></div>
<div style="left:804px;top:247px;width:1px;height:21px;background:#f1efe2"></div>
<div style="left:752px;top:250px;width:11px;height:11px;border:1px solid #333;background:#fff"></div>
<svg style="left:752px;top:250px" width="13" height="13" viewBox="0 0 13 13"><path d="M2.2 6.3 L4.9 9.1 L10.7 3.3" fill="none" stroke="#333" stroke-width="1.3"/></svg>
<div style="left:805px;top:247px;width:55px;height:20px;background:#efefef"></div>
<div style="left:805px;top:267px;width:55px;height:1px;background:#f1efe2"></div>
<div style="left:314px;top:268px;width:185px;height:21px;background:#f3f2eb"></div>
<div style="left:314px;top:268px;width:185px;height:1px;background:#fbfaf5"></div>
<div style="left:314px;top:287px;width:185px;height:1px;background:#e7e4d6"></div>
<div style="left:314px;top:288px;width:185px;height:1px;background:#d8d4c4"></div>
<div style="left:348px;top:268px;width:1px;height:21px;background:#d8d4c4"></div>
<div style="left:349px;top:268px;width:1px;height:20px;background:#fbfaf5"></div>
<div style="left:498px;top:268px;width:1px;height:20px;background:#e6e3d4"></div>
<div style="left:499px;top:268px;width:1px;height:21px;background:#d8d4c4"></div>
<div style="left:500px;top:268px;width:39px;height:20px;background:#efefef"></div>
<div style="left:500px;top:288px;width:39px;height:1px;background:#f1efe2"></div>
<div style="left:539px;top:268px;width:1px;height:21px;background:#f1efe2"></div>
<div style="left:540px;top:268px;width:40px;height:20px;background:#efefef"></div>
<div style="left:540px;top:288px;width:40px;height:1px;background:#f1efe2"></div>
<div style="left:580px;top:268px;width:1px;height:21px;background:#f1efe2"></div>
<div style="left:581px;top:268px;width:57px;height:20px;background:#efefef"></div>
<div style="left:581px;top:288px;width:57px;height:1px;background:#f1efe2"></div>
<div style="left:638px;top:268px;width:1px;height:21px;background:#f1efe2"></div>
<div style="left:639px;top:268px;width:73px;height:20px;background:#ffffff"></div>
<div style="left:639px;top:288px;width:73px;height:1px;background:#f1efe2"></div>
<div style="left:712px;top:268px;width:1px;height:21px;background:#f1efe2"></div>
<div style="left:669px;top:271px;width:11px;height:11px;border:1px solid #333;background:#fff"></div>
<svg style="left:669px;top:271px" width="13" height="13" viewBox="0 0 13 13"><path d="M2.2 6.3 L4.9 9.1 L10.7 3.3" fill="none" stroke="#333" stroke-width="1.3"/></svg>
<div style="left:713px;top:268px;width:91px;height:20px;background:#efefef"></div>
<div style="left:713px;top:288px;width:91px;height:1px;background:#f1efe2"></div>
<div style="left:804px;top:268px;width:1px;height:21px;background:#f1efe2"></div>
<div style="left:805px;top:268px;width:55px;height:20px;background:#efefef"></div>
<div style="left:805px;top:288px;width:55px;height:1px;background:#f1efe2"></div>
<div style="left:314px;top:289px;width:185px;height:21px;background:#f3f2eb"></div>
<div style="left:314px;top:289px;width:185px;height:1px;background:#fbfaf5"></div>
<div style="left:314px;top:308px;width:185px;height:1px;background:#e7e4d6"></div>
<div style="left:314px;top:309px;width:185px;height:1px;background:#d8d4c4"></div>
<div style="left:348px;top:289px;width:1px;height:21px;background:#d8d4c4"></div>
<div style="left:349px;top:289px;width:1px;height:20px;background:#fbfaf5"></div>
<div style="left:498px;top:289px;width:1px;height:20px;background:#e6e3d4"></div>
<div style="left:499px;top:289px;width:1px;height:21px;background:#d8d4c4"></div>
<div style="left:500px;top:289px;width:39px;height:20px;background:#efefef"></div>
<div style="left:500px;top:309px;width:39px;height:1px;background:#f1efe2"></div>
<div style="left:539px;top:289px;width:1px;height:21px;background:#f1efe2"></div>
<div style="left:540px;top:289px;width:40px;height:20px;background:#efefef"></div>
<div style="left:540px;top:309px;width:40px;height:1px;background:#f1efe2"></div>
<div style="left:580px;top:289px;width:1px;height:21px;background:#f1efe2"></div>
<div style="left:581px;top:289px;width:57px;height:20px;background:#efefef"></div>
<div style="left:581px;top:309px;width:57px;height:1px;background:#f1efe2"></div>
<div style="left:638px;top:289px;width:1px;height:21px;background:#f1efe2"></div>
<div style="left:639px;top:289px;width:73px;height:20px;background:#ffffff"></div>
<div style="left:639px;top:309px;width:73px;height:1px;background:#f1efe2"></div>
<div style="left:712px;top:289px;width:1px;height:21px;background:#f1efe2"></div>
<div style="left:669px;top:292px;width:11px;height:11px;border:1px solid #333;background:#fff"></div>
<svg style="left:669px;top:292px" width="13" height="13" viewBox="0 0 13 13"><path d="M2.2 6.3 L4.9 9.1 L10.7 3.3" fill="none" stroke="#333" stroke-width="1.3"/></svg>
<div style="left:713px;top:289px;width:91px;height:20px;background:#efefef"></div>
<div style="left:713px;top:309px;width:91px;height:1px;background:#f1efe2"></div>
<div style="left:804px;top:289px;width:1px;height:21px;background:#f1efe2"></div>
<div style="left:805px;top:289px;width:55px;height:20px;background:#efefef"></div>
<div style="left:805px;top:309px;width:55px;height:1px;background:#f1efe2"></div>
<div style="left:314px;top:310px;width:185px;height:21px;background:#ebe9dc"></div>
<div style="left:314px;top:310px;width:185px;height:1px;background:#fbfaf5"></div>
<div style="left:314px;top:329px;width:185px;height:1px;background:#e2dfd0"></div>
<div style="left:314px;top:330px;width:185px;height:1px;background:#d8d4c4"></div>
<div style="left:348px;top:310px;width:1px;height:21px;background:#d8d4c4"></div>
<div style="left:349px;top:310px;width:1px;height:20px;background:#fbfaf5"></div>
<div style="left:498px;top:310px;width:1px;height:20px;background:#e6e3d4"></div>
<div style="left:499px;top:310px;width:1px;height:21px;background:#d8d4c4"></div>
<div style="left:500px;top:310px;width:39px;height:20px;background:#ffffff"></div>
<div style="left:500px;top:330px;width:39px;height:1px;background:#f1efe2"></div>
<div style="left:539px;top:310px;width:1px;height:21px;background:#f1efe2"></div>
<div style="left:513px;top:313px;width:11px;height:11px;border:1px solid #333;background:#fff"></div>
<svg style="left:513px;top:313px" width="13" height="13" viewBox="0 0 13 13"><path d="M2.2 6.3 L4.9 9.1 L10.7 3.3" fill="none" stroke="#333" stroke-width="1.3"/></svg>
<div style="left:540px;top:310px;width:40px;height:20px;background:#ffffff"></div>
<div style="left:540px;top:330px;width:40px;height:1px;background:#f1efe2"></div>
<div style="left:580px;top:310px;width:1px;height:21px;background:#f1efe2"></div>
<div style="left:553px;top:313px;width:11px;height:11px;border:1px solid #333;background:#fff"></div>
<svg style="left:553px;top:313px" width="13" height="13" viewBox="0 0 13 13"><path d="M2.2 6.3 L4.9 9.1 L10.7 3.3" fill="none" stroke="#333" stroke-width="1.3"/></svg>
<div style="left:581px;top:310px;width:57px;height:20px;background:#ffffff"></div>
<div style="left:581px;top:330px;width:57px;height:1px;background:#f1efe2"></div>
<div style="left:638px;top:310px;width:1px;height:21px;background:#f1efe2"></div>
<div style="left:603px;top:313px;width:11px;height:11px;border:1px solid #333;background:#fff"></div>
<svg style="left:603px;top:313px" width="13" height="13" viewBox="0 0 13 13"><path d="M2.2 6.3 L4.9 9.1 L10.7 3.3" fill="none" stroke="#333" stroke-width="1.3"/></svg>
<div style="left:639px;top:310px;width:73px;height:20px;background:#ffffff"></div>
<div style="left:639px;top:330px;width:73px;height:1px;background:#f1efe2"></div>
<div style="left:712px;top:310px;width:1px;height:21px;background:#f1efe2"></div>
<div style="left:669px;top:313px;width:11px;height:11px;border:1px solid #333;background:#fff"></div>
<svg style="left:669px;top:313px" width="13" height="13" viewBox="0 0 13 13"><path d="M2.2 6.3 L4.9 9.1 L10.7 3.3" fill="none" stroke="#333" stroke-width="1.3"/></svg>
<div style="left:713px;top:310px;width:91px;height:20px;background:#ffffff"></div>
<div style="left:713px;top:330px;width:91px;height:1px;background:#f1efe2"></div>
<div style="left:804px;top:310px;width:1px;height:21px;background:#f1efe2"></div>
<div style="left:752px;top:313px;width:11px;height:11px;border:1px solid #333;background:#fff"></div>
<svg style="left:752px;top:313px" width="13" height="13" viewBox="0 0 13 13"><path d="M2.2 6.3 L4.9 9.1 L10.7 3.3" fill="none" stroke="#333" stroke-width="1.3"/></svg>
<div style="left:805px;top:310px;width:55px;height:20px;background:#ffffff"></div>
<div style="left:805px;top:330px;width:55px;height:1px;background:#f1efe2"></div>
<div style="left:826px;top:313px;width:11px;height:11px;border:1px solid #333;background:#fff"></div>
<svg style="left:826px;top:313px" width="13" height="13" viewBox="0 0 13 13"><path d="M2.2 6.3 L4.9 9.1 L10.7 3.3" fill="none" stroke="#333" stroke-width="1.3"/></svg>
<div style="left:353px;top:312px;width:11px;height:11px;border:1px solid #333;background:#fff"></div>
<svg style="left:353px;top:312px" width="13" height="13" viewBox="0 0 13 13"><path d="M2.2 6.3 L4.9 9.1 L10.7 3.3" fill="none" stroke="#333" stroke-width="1.3"/></svg>
<div style="left:325px;top:313px;width:11px;height:11px;border:1px solid #a8a8a8;background:#e3e3e3"></div>
<div style="left:328px;top:319px;width:7px;height:1px;background:#000"></div>
<div style="left:314px;top:331px;width:185px;height:21px;background:#f3f2eb"></div>
<div style="left:314px;top:331px;width:185px;height:1px;background:#fbfaf5"></div>
<div style="left:314px;top:350px;width:185px;height:1px;background:#e7e4d6"></div>
<div style="left:314px;top:351px;width:185px;height:1px;background:#d8d4c4"></div>
<div style="left:348px;top:331px;width:1px;height:21px;background:#d8d4c4"></div>
<div style="left:349px;top:331px;width:1px;height:20px;background:#fbfaf5"></div>
<div style="left:498px;top:331px;width:1px;height:20px;background:#e6e3d4"></div>
<div style="left:499px;top:331px;width:1px;height:21px;background:#d8d4c4"></div>
<div style="left:500px;top:331px;width:39px;height:20px;background:#ffffff"></div>
<div style="left:500px;top:351px;width:39px;height:1px;background:#f1efe2"></div>
<div style="left:539px;top:331px;width:1px;height:21px;background:#f1efe2"></div>
<div style="left:513px;top:334px;width:11px;height:11px;border:1px solid #333;background:#fff"></div>
<svg style="left:513px;top:334px" width="13" height="13" viewBox="0 0 13 13"><path d="M2.2 6.3 L4.9 9.1 L10.7 3.3" fill="none" stroke="#333" stroke-width="1.3"/></svg>
<div style="left:540px;top:331px;width:40px;height:20px;background:#efefef"></div>
<div style="left:540px;top:351px;width:40px;height:1px;background:#f1efe2"></div>
<div style="left:580px;top:331px;width:1px;height:21px;background:#f1efe2"></div>
<div style="left:581px;top:331px;width:57px;height:20px;background:#efefef"></div>
<div style="left:581px;top:351px;width:57px;height:1px;background:#f1efe2"></div>
<div style="left:638px;top:331px;width:1px;height:21px;background:#f1efe2"></div>
<div style="left:639px;top:331px;width:73px;height:20px;background:#efefef"></div>
<div style="left:639px;top:351px;width:73px;height:1px;background:#f1efe2"></div>
<div style="left:712px;top:331px;width:1px;height:21px;background:#f1efe2"></div>
<div style="left:713px;top:331px;width:91px;height:20px;background:#efefef"></div>
<div style="left:713px;top:351px;width:91px;height:1px;background:#f1efe2"></div>
<div style="left:804px;top:331px;width:1px;height:21px;background:#f1efe2"></div>
<div style="left:805px;top:331px;width:55px;height:20px;background:#efefef"></div>
<div style="left:805px;top:351px;width:55px;height:1px;background:#f1efe2"></div>
<div style="left:314px;top:352px;width:185px;height:21px;background:#f3f2eb"></div>
<div style="left:314px;top:352px;width:185px;height:1px;background:#fbfaf5"></div>
<div style="left:314px;top:371px;width:185px;height:1px;background:#e7e4d6"></div>
<div style="left:314px;top:372px;width:185px;height:1px;background:#d8d4c4"></div>
<div style="left:348px;top:352px;width:1px;height:21px;background:#d8d4c4"></div>
<div style="left:349px;top:352px;width:1px;height:20px;background:#fbfaf5"></div>
<div style="left:498px;top:352px;width:1px;height:20px;background:#e6e3d4"></div>
<div style="left:499px;top:352px;width:1px;height:21px;background:#d8d4c4"></div>
<div style="left:500px;top:352px;width:39px;height:20px;background:#ffffff"></div>
<div style="left:500px;top:372px;width:39px;height:1px;background:#f1efe2"></div>
<div style="left:539px;top:352px;width:1px;height:21px;background:#f1efe2"></div>
<div style="left:513px;top:355px;width:11px;height:11px;border:1px solid #333;background:#fff"></div>
<svg style="left:513px;top:355px" width="13" height="13" viewBox="0 0 13 13"><path d="M2.2 6.3 L4.9 9.1 L10.7 3.3" fill="none" stroke="#333" stroke-width="1.3"/></svg>
<div style="left:540px;top:352px;width:40px;height:20px;background:#efefef"></div>
<div style="left:540px;top:372px;width:40px;height:1px;background:#f1efe2"></div>
<div style="left:580px;top:352px;width:1px;height:21px;background:#f1efe2"></div>
<div style="left:581px;top:352px;width:57px;height:20px;background:#efefef"></div>
<div style="left:581px;top:372px;width:57px;height:1px;background:#f1efe2"></div>
<div style="left:638px;top:352px;width:1px;height:21px;background:#f1efe2"></div>
<div style="left:639px;top:352px;width:73px;height:20px;background:#efefef"></div>
<div style="left:639px;top:372px;width:73px;height:1px;background:#f1efe2"></div>
<div style="left:712px;top:352px;width:1px;height:21px;background:#f1efe2"></div>
<div style="left:713px;top:352px;width:91px;height:20px;background:#efefef"></div>
<div style="left:713px;top:372px;width:91px;height:1px;background:#f1efe2"></div>
<div style="left:804px;top:352px;width:1px;height:21px;background:#f1efe2"></div>
<div style="left:805px;top:352px;width:55px;height:20px;background:#efefef"></div>
<div style="left:805px;top:372px;width:55px;height:1px;background:#f1efe2"></div>
<div style="left:314px;top:373px;width:185px;height:21px;background:#f3f2eb"></div>
<div style="left:314px;top:373px;width:185px;height:1px;background:#fbfaf5"></div>
<div style="left:314px;top:392px;width:185px;height:1px;background:#e7e4d6"></div>
<div style="left:314px;top:393px;width:185px;height:1px;background:#d8d4c4"></div>
<div style="left:348px;top:373px;width:1px;height:21px;background:#d8d4c4"></div>
<div style="left:349px;top:373px;width:1px;height:20px;background:#fbfaf5"></div>
<div style="left:498px;top:373px;width:1px;height:20px;background:#e6e3d4"></div>
<div style="left:499px;top:373px;width:1px;height:21px;background:#d8d4c4"></div>
<div style="left:500px;top:373px;width:39px;height:20px;background:#ffffff"></div>
<div style="left:500px;top:393px;width:39px;height:1px;background:#f1efe2"></div>
<div style="left:539px;top:373px;width:1px;height:21px;background:#f1efe2"></div>
<div style="left:513px;top:376px;width:11px;height:11px;border:1px solid #333;background:#fff"></div>
<svg style="left:513px;top:376px" width="13" height="13" viewBox="0 0 13 13"><path d="M2.2 6.3 L4.9 9.1 L10.7 3.3" fill="none" stroke="#333" stroke-width="1.3"/></svg>
<div style="left:540px;top:373px;width:40px;height:20px;background:#efefef"></div>
<div style="left:540px;top:393px;width:40px;height:1px;background:#f1efe2"></div>
<div style="left:580px;top:373px;width:1px;height:21px;background:#f1efe2"></div>
<div style="left:581px;top:373px;width:57px;height:20px;background:#efefef"></div>
<div style="left:581px;top:393px;width:57px;height:1px;background:#f1efe2"></div>
<div style="left:638px;top:373px;width:1px;height:21px;background:#f1efe2"></div>
<div style="left:639px;top:373px;width:73px;height:20px;background:#efefef"></div>
<div style="left:639px;top:393px;width:73px;height:1px;background:#f1efe2"></div>
<div style="left:712px;top:373px;width:1px;height:21px;background:#f1efe2"></div>
<div style="left:713px;top:373px;width:91px;height:20px;background:#efefef"></div>
<div style="left:713px;top:393px;width:91px;height:1px;background:#f1efe2"></div>
<div style="left:804px;top:373px;width:1px;height:21px;background:#f1efe2"></div>
<div style="left:805px;top:373px;width:55px;height:20px;background:#efefef"></div>
<div style="left:805px;top:393px;width:55px;height:1px;background:#f1efe2"></div>
<div style="left:314px;top:394px;width:185px;height:21px;background:#f3f2eb"></div>
<div style="left:314px;top:394px;width:185px;height:1px;background:#fbfaf5"></div>
<div style="left:314px;top:413px;width:185px;height:1px;background:#e7e4d6"></div>
<div style="left:314px;top:414px;width:185px;height:1px;background:#d8d4c4"></div>
<div style="left:348px;top:394px;width:1px;height:21px;background:#d8d4c4"></div>
<div style="left:349px;top:394px;width:1px;height:20px;background:#fbfaf5"></div>
<div style="left:498px;top:394px;width:1px;height:20px;background:#e6e3d4"></div>
<div style="left:499px;top:394px;width:1px;height:21px;background:#d8d4c4"></div>
<div style="left:500px;top:394px;width:39px;height:20px;background:#efefef"></div>
<div style="left:500px;top:414px;width:39px;height:1px;background:#f1efe2"></div>
<div style="left:539px;top:394px;width:1px;height:21px;background:#f1efe2"></div>
<div style="left:540px;top:394px;width:40px;height:20px;background:#ffffff"></div>
<div style="left:540px;top:414px;width:40px;height:1px;background:#f1efe2"></div>
<div style="left:580px;top:394px;width:1px;height:21px;background:#f1efe2"></div>
<div style="left:553px;top:397px;width:11px;height:11px;border:1px solid #333;background:#fff"></div>
<svg style="left:553px;top:397px" width="13" height="13" viewBox="0 0 13 13"><path d="M2.2 6.3 L4.9 9.1 L10.7 3.3" fill="none" stroke="#333" stroke-width="1.3"/></svg>
<div style="left:581px;top:394px;width:57px;height:20px;background:#efefef"></div>
<div style="left:581px;top:414px;width:57px;height:1px;background:#f1efe2"></div>
<div style="left:638px;top:394px;width:1px;height:21px;background:#f1efe2"></div>
<div style="left:639px;top:394px;width:73px;height:20px;background:#efefef"></div>
<div style="left:639px;top:414px;width:73px;height:1px;background:#f1efe2"></div>
<div style="left:712px;top:394px;width:1px;height:21px;background:#f1efe2"></div>
<div style="left:713px;top:394px;width:91px;height:20px;background:#efefef"></div>
<div style="left:713px;top:414px;width:91px;height:1px;background:#f1efe2"></div>
<div style="left:804px;top:394px;width:1px;height:21px;background:#f1efe2"></div>
<div style="left:805px;top:394px;width:55px;height:20px;background:#efefef"></div>
<div style="left:805px;top:414px;width:55px;height:1px;background:#f1efe2"></div>
<div style="left:314px;top:415px;width:185px;height:21px;background:#f3f2eb"></div>
<div style="left:314px;top:415px;width:185px;height:1px;background:#fbfaf5"></div>
<div style="left:314px;top:434px;width:185px;height:1px;background:#e7e4d6"></div>
<div style="left:314px;top:435px;width:185px;height:1px;background:#d8d4c4"></div>
<div style="left:348px;top:415px;width:1px;height:21px;background:#d8d4c4"></div>
<div style="left:349px;top:415px;width:1px;height:20px;background:#fbfaf5"></div>
<div style="left:498px;top:415px;width:1px;height:20px;background:#e6e3d4"></div>
<div style="left:499px;top:415px;width:1px;height:21px;background:#d8d4c4"></div>
<div style="left:500px;top:415px;width:39px;height:20px;background:#efefef"></div>
<div style="left:500px;top:435px;width:39px;height:1px;background:#f1efe2"></div>
<div style="left:539px;top:415px;width:1px;height:21px;background:#f1efe2"></div>
<div style="left:540px;top:415px;width:40px;height:20px;background:#efefef"></div>
<div style="left:540px;top:435px;width:40px;height:1px;background:#f1efe2"></div>
<div style="left:580px;top:415px;width:1px;height:21px;background:#f1efe2"></div>
<div style="left:581px;top:415px;width:57px;height:20px;background:#efefef"></div>
<div style="left:581px;top:435px;width:57px;height:1px;background:#f1efe2"></div>
<div style="left:638px;top:415px;width:1px;height:21px;background:#f1efe2"></div>
<div style="left:639px;top:415px;width:73px;height:20px;background:#ffffff"></div>
<div style="left:639px;top:435px;width:73px;height:1px;background:#f1efe2"></div>
<div style="left:712px;top:415px;width:1px;height:21px;background:#f1efe2"></div>
<div style="left:669px;top:418px;width:11px;height:11px;border:1px solid #333;background:#fff"></div>
<svg style="left:669px;top:418px" width="13" height="13" viewBox="0 0 13 13"><path d="M2.2 6.3 L4.9 9.1 L10.7 3.3" fill="none" stroke="#333" stroke-width="1.3"/></svg>
<div style="left:713px;top:415px;width:91px;height:20px;background:#efefef"></div>
<div style="left:713px;top:435px;width:91px;height:1px;background:#f1efe2"></div>
<div style="left:804px;top:415px;width:1px;height:21px;background:#f1efe2"></div>
<div style="left:805px;top:415px;width:55px;height:20px;background:#efefef"></div>
<div style="left:805px;top:435px;width:55px;height:1px;background:#f1efe2"></div>
<div style="left:314px;top:436px;width:185px;height:21px;background:#f3f2eb"></div>
<div style="left:314px;top:436px;width:185px;height:1px;background:#fbfaf5"></div>
<div style="left:314px;top:455px;width:185px;height:1px;background:#e7e4d6"></div>
<div style="left:314px;top:456px;width:185px;height:1px;background:#d8d4c4"></div>
<div style="left:348px;top:436px;width:1px;height:21px;background:#d8d4c4"></div>
<div style="left:349px;top:436px;width:1px;height:20px;background:#fbfaf5"></div>
<div style="left:498px;top:436px;width:1px;height:20px;background:#e6e3d4"></div>
<div style="left:499px;top:436px;width:1px;height:21px;background:#d8d4c4"></div>
<div style="left:500px;top:436px;width:39px;height:20px;background:#efefef"></div>
<div style="left:500px;top:456px;width:39px;height:1px;background:#f1efe2"></div>
<div style="left:539px;top:436px;width:1px;height:21px;background:#f1efe2"></div>
<div style="left:540px;top:436px;width:40px;height:20px;background:#efefef"></div>
<div style="left:540px;top:456px;width:40px;height:1px;background:#f1efe2"></div>
<div style="left:580px;top:436px;width:1px;height:21px;background:#f1efe2"></div>
<div style="left:581px;top:436px;width:57px;height:20px;background:#efefef"></div>
<div style="left:581px;top:456px;width:57px;height:1px;background:#f1efe2"></div>
<div style="left:638px;top:436px;width:1px;height:21px;background:#f1efe2"></div>
<div style="left:639px;top:436px;width:73px;height:20px;background:#ffffff"></div>
<div style="left:639px;top:456px;width:73px;height:1px;background:#f1efe2"></div>
<div style="left:712px;top:436px;width:1px;height:21px;background:#f1efe2"></div>
<div style="left:669px;top:439px;width:11px;height:11px;border:1px solid #333;background:#fff"></div>
<svg style="left:669px;top:439px" width="13" height="13" viewBox="0 0 13 13"><path d="M2.2 6.3 L4.9 9.1 L10.7 3.3" fill="none" stroke="#333" stroke-width="1.3"/></svg>
<div style="left:713px;top:436px;width:91px;height:20px;background:#efefef"></div>
<div style="left:713px;top:456px;width:91px;height:1px;background:#f1efe2"></div>
<div style="left:804px;top:436px;width:1px;height:21px;background:#f1efe2"></div>
<div style="left:805px;top:436px;width:55px;height:20px;background:#efefef"></div>
<div style="left:805px;top:456px;width:55px;height:1px;background:#f1efe2"></div>
<div style="left:314px;top:457px;width:185px;height:21px;background:#f3f2eb"></div>
<div style="left:314px;top:457px;width:185px;height:1px;background:#fbfaf5"></div>
<div style="left:314px;top:476px;width:185px;height:1px;background:#e7e4d6"></div>
<div style="left:314px;top:477px;width:185px;height:1px;background:#d8d4c4"></div>
<div style="left:348px;top:457px;width:1px;height:21px;background:#d8d4c4"></div>
<div style="left:349px;top:457px;width:1px;height:20px;background:#fbfaf5"></div>
<div style="left:498px;top:457px;width:1px;height:20px;background:#e6e3d4"></div>
<div style="left:499px;top:457px;width:1px;height:21px;background:#d8d4c4"></div>
<div style="left:500px;top:457px;width:39px;height:20px;background:#efefef"></div>
<div style="left:500px;top:477px;width:39px;height:1px;background:#f1efe2"></div>
<div style="left:539px;top:457px;width:1px;height:21px;background:#f1efe2"></div>
<div style="left:540px;top:457px;width:40px;height:20px;background:#efefef"></div>
<div style="left:540px;top:477px;width:40px;height:1px;background:#f1efe2"></div>
<div style="left:580px;top:457px;width:1px;height:21px;background:#f1efe2"></div>
<div style="left:581px;top:457px;width:57px;height:20px;background:#efefef"></div>
<div style="left:581px;top:477px;width:57px;height:1px;background:#f1efe2"></div>
<div style="left:638px;top:457px;width:1px;height:21px;background:#f1efe2"></div>
<div style="left:639px;top:457px;width:73px;height:20px;background:#ffffff"></div>
<div style="left:639px;top:477px;width:73px;height:1px;background:#f1efe2"></div>
<div style="left:712px;top:457px;width:1px;height:21px;background:#f1efe2"></div>
<div style="left:669px;top:460px;width:11px;height:11px;border:1px solid #333;background:#fff"></div>
<svg style="left:669px;top:460px" width="13" height="13" viewBox="0 0 13 13"><path d="M2.2 6.3 L4.9 9.1 L10.7 3.3" fill="none" stroke="#333" stroke-width="1.3"/></svg>
<div style="left:713px;top:457px;width:91px;height:20px;background:#efefef"></div>
<div style="left:713px;top:477px;width:91px;height:1px;background:#f1efe2"></div>
<div style="left:804px;top:457px;width:1px;height:21px;background:#f1efe2"></div>
<div style="left:805px;top:457px;width:55px;height:20px;background:#efefef"></div>
<div style="left:805px;top:477px;width:55px;height:1px;background:#f1efe2"></div>
<div style="left:314px;top:478px;width:185px;height:21px;background:#f3f2eb"></div>
<div style="left:314px;top:478px;width:185px;height:1px;background:#fbfaf5"></div>
<div style="left:314px;top:497px;width:185px;height:1px;background:#e7e4d6"></div>
<div style="left:314px;top:498px;width:185px;height:1px;background:#d8d4c4"></div>
<div style="left:348px;top:478px;width:1px;height:21px;background:#d8d4c4"></div>
<div style="left:349px;top:478px;width:1px;height:20px;background:#fbfaf5"></div>
<div style="left:498px;top:478px;width:1px;height:20px;background:#e6e3d4"></div>
<div style="left:499px;top:478px;width:1px;height:21px;background:#d8d4c4"></div>
<div style="left:500px;top:478px;width:39px;height:20px;background:#efefef"></div>
<div style="left:500px;top:498px;width:39px;height:1px;background:#f1efe2"></div>
<div style="left:539px;top:478px;width:1px;height:21px;background:#f1efe2"></div>
<div style="left:540px;top:478px;width:40px;height:20px;background:#efefef"></div>
<div style="left:540px;top:498px;width:40px;height:1px;background:#f1efe2"></div>
<div style="left:580px;top:478px;width:1px;height:21px;background:#f1efe2"></div>
<div style="left:581px;top:478px;width:57px;height:20px;background:#efefef"></div>
<div style="left:581px;top:498px;width:57px;height:1px;background:#f1efe2"></div>
<div style="left:638px;top:478px;width:1px;height:21px;background:#f1efe2"></div>
<div style="left:639px;top:478px;width:73px;height:20px;background:#ffffff"></div>
<div style="left:639px;top:498px;width:73px;height:1px;background:#f1efe2"></div>
<div style="left:712px;top:478px;width:1px;height:21px;background:#f1efe2"></div>
<div style="left:669px;top:481px;width:11px;height:11px;border:1px solid #333;background:#fff"></div>
<svg style="left:669px;top:481px" width="13" height="13" viewBox="0 0 13 13"><path d="M2.2 6.3 L4.9 9.1 L10.7 3.3" fill="none" stroke="#333" stroke-width="1.3"/></svg>
<div style="left:713px;top:478px;width:91px;height:20px;background:#efefef"></div>
<div style="left:713px;top:498px;width:91px;height:1px;background:#f1efe2"></div>
<div style="left:804px;top:478px;width:1px;height:21px;background:#f1efe2"></div>
<div style="left:805px;top:478px;width:55px;height:20px;background:#efefef"></div>
<div style="left:805px;top:498px;width:55px;height:1px;background:#f1efe2"></div>
<div style="left:314px;top:499px;width:185px;height:21px;background:#ebe9dc"></div>
<div style="left:314px;top:499px;width:185px;height:1px;background:#fbfaf5"></div>
<div style="left:314px;top:518px;width:185px;height:1px;background:#e2dfd0"></div>
<div style="left:314px;top:519px;width:185px;height:1px;background:#d8d4c4"></div>
<div style="left:348px;top:499px;width:1px;height:21px;background:#d8d4c4"></div>
<div style="left:349px;top:499px;width:1px;height:20px;background:#fbfaf5"></div>
<div style="left:498px;top:499px;width:1px;height:20px;background:#e6e3d4"></div>
<div style="left:499px;top:499px;width:1px;height:21px;background:#d8d4c4"></div>
<div style="left:500px;top:499px;width:39px;height:20px;background:#ffffff"></div>
<div style="left:500px;top:519px;width:39px;height:1px;background:#f1efe2"></div>
<div style="left:539px;top:499px;width:1px;height:21px;background:#f1efe2"></div>
<div style="left:513px;top:502px;width:11px;height:11px;border:1px solid #333;background:#fff"></div>
<svg style="left:513px;top:502px" width="13" height="13" viewBox="0 0 13 13"><path d="M2.2 6.3 L4.9 9.1 L10.7 3.3" fill="none" stroke="#333" stroke-width="1.3"/></svg>
<div style="left:540px;top:499px;width:40px;height:20px;background:#ffffff"></div>
<div style="left:540px;top:519px;width:40px;height:1px;background:#f1efe2"></div>
<div style="left:580px;top:499px;width:1px;height:21px;background:#f1efe2"></div>
<div style="left:553px;top:502px;width:11px;height:11px;border:1px solid #333;background:#fff"></div>
<svg style="left:553px;top:502px" width="13" height="13" viewBox="0 0 13 13"><path d="M2.2 6.3 L4.9 9.1 L10.7 3.3" fill="none" stroke="#333" stroke-width="1.3"/></svg>
<div style="left:581px;top:499px;width:57px;height:20px;background:#ffffff"></div>
<div style="left:581px;top:519px;width:57px;height:1px;background:#f1efe2"></div>
<div style="left:638px;top:499px;width:1px;height:21px;background:#f1efe2"></div>
<div style="left:603px;top:502px;width:11px;height:11px;border:1px solid #333;background:#fff"></div>
<svg style="left:603px;top:502px" width="13" height="13" viewBox="0 0 13 13"><path d="M2.2 6.3 L4.9 9.1 L10.7 3.3" fill="none" stroke="#333" stroke-width="1.3"/></svg>
<div style="left:639px;top:499px;width:73px;height:20px;background:#ffffff"></div>
<div style="left:639px;top:519px;width:73px;height:1px;background:#f1efe2"></div>
<div style="left:712px;top:499px;width:1px;height:21px;background:#f1efe2"></div>
<div style="left:669px;top:502px;width:11px;height:11px;border:1px solid #333;background:#fff"></div>
<svg style="left:669px;top:502px" width="13" height="13" viewBox="0 0 13 13"><path d="M2.2 6.3 L4.9 9.1 L10.7 3.3" fill="none" stroke="#333" stroke-width="1.3"/></svg>
<div style="left:713px;top:499px;width:91px;height:20px;background:#ffffff"></div>
<div style="left:713px;top:519px;width:91px;height:1px;background:#f1efe2"></div>
<div style="left:804px;top:499px;width:1px;height:21px;background:#f1efe2"></div>
<div style="left:752px;top:502px;width:11px;height:11px;border:1px solid #333;background:#fff"></div>
<svg style="left:752px;top:502px" width="13" height="13" viewBox="0 0 13 13"><path d="M2.2 6.3 L4.9 9.1 L10.7 3.3" fill="none" stroke="#333" stroke-width="1.3"/></svg>
<div style="left:805px;top:499px;width:55px;height:20px;background:#ffffff"></div>
<div style="left:805px;top:519px;width:55px;height:1px;background:#f1efe2"></div>
<div style="left:826px;top:502px;width:11px;height:11px;border:1px solid #333;background:#fff"></div>
<svg style="left:826px;top:502px" width="13" height="13" viewBox="0 0 13 13"><path d="M2.2 6.3 L4.9 9.1 L10.7 3.3" fill="none" stroke="#333" stroke-width="1.3"/></svg>
<div style="left:353px;top:501px;width:11px;height:11px;border:1px solid #333;background:#fff"></div>
<svg style="left:353px;top:501px" width="13" height="13" viewBox="0 0 13 13"><path d="M2.2 6.3 L4.9 9.1 L10.7 3.3" fill="none" stroke="#333" stroke-width="1.3"/></svg>
<div style="left:325px;top:503px;width:11px;height:11px;border:1px solid #a8a8a8;background:#e3e3e3"></div>
<div style="left:328px;top:509px;width:7px;height:1px;background:#000"></div>
<div style="left:331px;top:506px;width:1px;height:7px;background:#000"></div>
<div style="left:314px;top:520px;width:185px;height:2px;background:#f3f2eb"></div>
<div style="left:314px;top:520px;width:185px;height:1px;background:#fbfaf5"></div>
<div style="left:348px;top:520px;width:1px;height:2px;background:#d8d4c4"></div>
<div style="left:349px;top:520px;width:1px;height:2px;background:#fbfaf5"></div>
<div style="left:498px;top:520px;width:1px;height:2px;background:#e6e3d4"></div>
<div style="left:499px;top:520px;width:1px;height:2px;background:#d8d4c4"></div>
<div style="left:500px;top:520px;width:39px;height:2px;background:#efefef"></div>
<div style="left:539px;top:520px;width:1px;height:2px;background:#f1efe2"></div>
<div style="left:540px;top:520px;width:40px;height:2px;background:#efefef"></div>
<div style="left:580px;top:520px;width:1px;height:2px;background:#f1efe2"></div>
<div style="left:581px;top:520px;width:57px;height:2px;background:#efefef"></div>
<div style="left:638px;top:520px;width:1px;height:2px;background:#f1efe2"></div>
<div style="left:639px;top:520px;width:73px;height:2px;background:#efefef"></div>
<div style="left:712px;top:520px;width:1px;height:2px;background:#f1efe2"></div>
<div style="left:713px;top:520px;width:91px;height:2px;background:#efefef"></div>
<div style="left:804px;top:520px;width:1px;height:2px;background:#f1efe2"></div>
<div style="left:805px;top:520px;width:55px;height:2px;background:#efefef"></div>
<div style="left:860px;top:81px;width:1px;height:441px;background:#fff"></div>
<div style="left:861px;top:81px;width:15px;height:441px;background:#f0f0f0"></div>
<div style="left:876px;top:81px;width:1px;height:441px;background:#f0f0f0"></div>
<div style="left:861px;top:98px;width:15px;height:338px;background:#cdcdcd"></div>
<svg style="left:864px;top:86px" width="10" height="8" viewBox="0 0 10 8"><path d="M1.2 6.2 L5 2.4 L8.8 6.2" fill="none" stroke="#606060" stroke-width="2"/></svg>
<svg style="left:864px;top:510px" width="10" height="8" viewBox="0 0 10 8"><path d="M1.2 1.8 L5 5.6 L8.8 1.8" fill="none" stroke="#606060" stroke-width="2"/></svg>
<span style="left:30.4px;top:10px;font-size:12px;line-height:12px;color:#fff;transform:scaleX(0.953);">User Group Permissions</span>
<span style="left:302.6px;top:45px;font-size:11px;line-height:11px;color:#000;transform:scaleX(0.948);">Static permissions</span>
<span style="left:458.7px;top:45px;font-size:11px;line-height:11px;color:#000;transform:scaleX(0.934);">Dynamic permissions</span>
<span style="left:20.0px;top:90px;font-size:11px;line-height:11px;color:#000;transform:scaleX(0.957);">GroupID field</span>
<span style="left:182.5px;top:90px;font-size:11px;line-height:11px;color:#000;transform:scaleX(0.959);">Show individual pages</span>
<span style="left:24.0px;top:117px;font-size:11px;line-height:11px;color:#000;transform:scaleX(0.940);">username</span>
<span style="left:29.0px;top:144px;font-size:11px;line-height:11px;color:#000;transform:scaleX(0.951);">User groups</span>
<span style="left:97.0px;top:167px;font-size:11px;line-height:11px;color:#000;transform:scaleX(0.965);">Add group</span>
<span style="left:195.0px;top:167px;font-size:11px;line-height:11px;color:#9da0b3;transform:scaleX(0.943);">Del group</span>
<span style="left:57.5px;top:199px;font-size:11px;line-height:11px;color:#000;transform:scaleX(1.038);">&lt;Default&gt;</span>
<span style="left:57.5px;top:216px;font-size:11px;line-height:11px;color:#000;transform:scaleX(1.007);">&lt;Guest&gt;</span>
<span style="left:57.0px;top:233px;font-size:11px;line-height:11px;color:#000;transform:scaleX(0.901);">admin</span>
<span style="left:210.2px;top:533px;font-size:11px;line-height:11px;color:#000;transform:scaleX(0.969);">Admin group (can see and edit all  records)</span>
<span style="left:465.0px;top:533px;font-size:11px;line-height:11px;color:#000;transform:scaleX(0.981);">Web Reports and Charts administrator</span>
<span style="left:329.5px;top:572px;font-size:11px;line-height:11px;color:#000;transform:scaleX(0.912);">OK</span>
<span style="left:407.6px;top:572px;font-size:11px;line-height:11px;color:#000;transform:scaleX(0.935);">Cancel</span>
<span style="left:500.0px;top:572px;font-size:11px;line-height:11px;color:#000;transform:scaleX(0.955);">Help</span>
<span style="left:410.5px;top:84px;font-size:11px;line-height:11px;font-weight:bold;color:#000;transform:scaleX(1.256);">Table Name</span>
<span style="left:432.8px;top:97px;font-size:11px;line-height:11px;font-weight:bold;color:#000;transform:scaleX(1.202);">Page</span>
<span style="left:507.4px;top:84px;font-size:11px;line-height:11px;font-weight:bold;color:#000;transform:scaleX(1.165);">Add</span>
<span style="left:548.0px;top:84px;font-size:11px;line-height:11px;font-weight:bold;color:#000;transform:scaleX(1.189);">Edit</span>
<span style="left:588.9px;top:84px;font-size:11px;line-height:11px;font-weight:bold;color:#000;transform:scaleX(1.275);">Delete</span>
<span style="left:645.2px;top:84px;font-size:11px;line-height:11px;font-weight:bold;color:#000;transform:scaleX(1.249);">List/View</span>
<span style="left:718.8px;top:84px;font-size:11px;line-height:11px;font-weight:bold;color:#000;transform:scaleX(1.268);">Export/Print</span>
<span style="left:810.8px;top:84px;font-size:11px;line-height:11px;font-weight:bold;color:#000;transform:scaleX(1.300);">Import</span>
<span style="left:373.8px;top:124px;font-size:11px;line-height:11px;font-weight:bold;color:#000;transform:scaleX(1.280);">&lt;global&gt;</span>
<span style="left:373.8px;top:145px;font-size:11px;line-height:11px;font-weight:bold;color:#000;transform:scaleX(1.207);">carsbcolor</span>
<span style="left:354.3px;top:166px;font-size:11px;line-height:11px;color:#000;transform:scaleX(1.101);">add</span>
<span style="left:354.3px;top:187px;font-size:11px;line-height:11px;color:#000;transform:scaleX(1.167);">edit</span>
<span style="left:354.3px;top:208px;font-size:11px;line-height:11px;color:#000;transform:scaleX(1.168);">list</span>
<span style="left:354.3px;top:229px;font-size:11px;line-height:11px;color:#000;transform:scaleX(1.109);">list1</span>
<span style="left:354.3px;top:250px;font-size:11px;line-height:11px;color:#000;transform:scaleX(1.201);">print</span>
<span style="left:354.3px;top:271px;font-size:11px;line-height:11px;color:#000;transform:scaleX(1.133);">search</span>
<span style="left:354.3px;top:292px;font-size:11px;line-height:11px;color:#000;transform:scaleX(1.168);">view</span>
<span style="left:373.8px;top:313px;font-size:11px;line-height:11px;font-weight:bold;color:#000;transform:scaleX(1.230);">carscars</span>
<span style="left:354.3px;top:334px;font-size:11px;line-height:11px;color:#000;transform:scaleX(1.101);">add</span>
<span style="left:354.3px;top:355px;font-size:11px;line-height:11px;color:#000;transform:scaleX(1.099);">add1</span>
<span style="left:354.3px;top:376px;font-size:11px;line-height:11px;color:#000;transform:scaleX(1.116);">add2</span>
<span style="left:354.3px;top:397px;font-size:11px;line-height:11px;color:#000;transform:scaleX(1.167);">edit</span>
<span style="left:354.3px;top:418px;font-size:11px;line-height:11px;color:#000;transform:scaleX(1.168);">list</span>
<span style="left:354.3px;top:439px;font-size:11px;line-height:11px;color:#000;transform:scaleX(1.109);">list1</span>
<span style="left:354.3px;top:460px;font-size:11px;line-height:11px;color:#000;transform:scaleX(1.133);">search</span>
<span style="left:354.3px;top:481px;font-size:11px;line-height:11px;color:#000;transform:scaleX(1.168);">view</span>
<span style="left:373.8px;top:502px;font-size:11px;line-height:11px;font-weight:bold;color:#000;transform:scaleX(1.244);">carscategory</span>
</body></html>
